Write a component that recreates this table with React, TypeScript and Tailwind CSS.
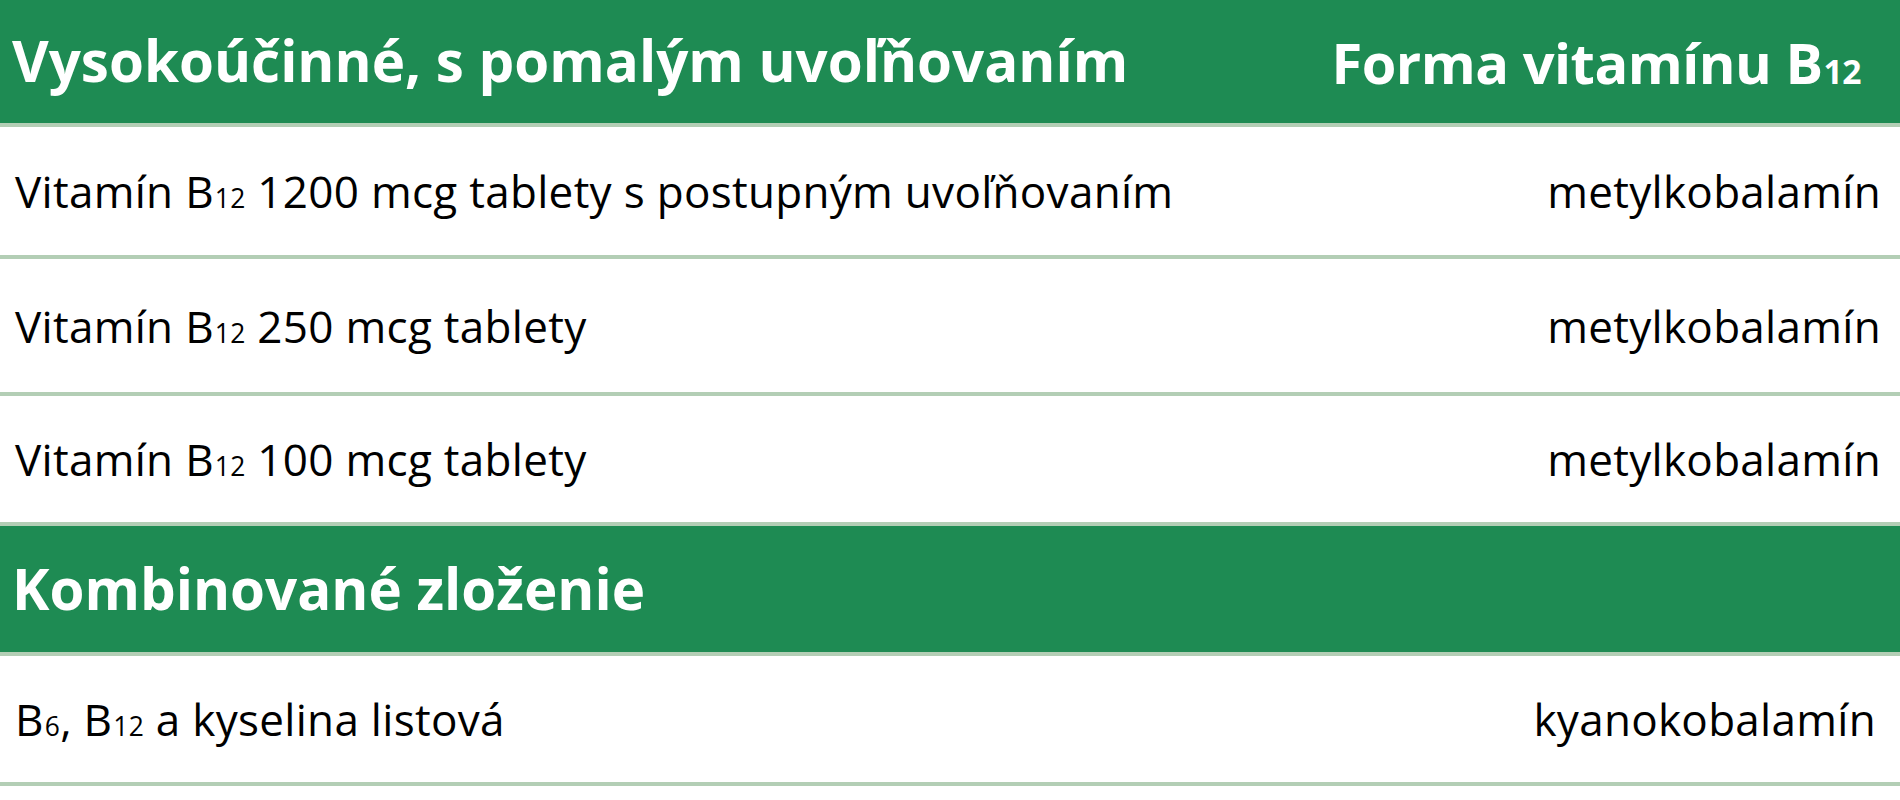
import React from 'react';

const rowFont = { fontFamily: '"Open Sans", Lato, sans-serif' };

function Sub({ children }: { children: React.ReactNode }) {
  return <span className="text-[0.6em] ml-[1px]">{children}</span>;
}

export default function App() {
  return (
    <div className="w-[1900px] h-[800px] bg-white text-black" style={rowFont}>
      {/* Section header */}
      <div className="h-[127px] bg-[#1e8b53] border-b-4 border-[#b3ceb5] flex items-center justify-between pl-[12px] pr-[39px] text-white font-bold text-[56px] leading-none">
        <span className="text-[56.5px]">Vysokoúčinné, s pomalým uvoľňovaním</span>
        <span className="tracking-[-0.5px]">
          Forma vitamínu B<Sub>12</Sub>
        </span>
      </div>

      {/* Rows */}
      <div className="h-[132px] border-b-4 border-[#b3ceb5] flex items-center justify-between pl-[15px] pr-[19px] text-[44px] leading-none tracking-[0.3px]">
        <span>
          Vitamín B<Sub>12</Sub> 1200 mcg tablety s postupným uvoľňovaním
        </span>
        <span>metylkobalamín</span>
      </div>
      <div className="h-[137px] border-b-4 border-[#b3ceb5] flex items-center justify-between pl-[15px] pr-[19px] text-[44px] leading-none tracking-[0.3px]">
        <span>
          Vitamín B<Sub>12</Sub> 250 mcg tablety
        </span>
        <span>metylkobalamín</span>
      </div>
      <div className="h-[130px] border-b-4 border-[#b3ceb5] flex items-center justify-between pl-[15px] pr-[19px] text-[44px] leading-none tracking-[0.3px]">
        <span>
          Vitamín B<Sub>12</Sub> 100 mcg tablety
        </span>
        <span>metylkobalamín</span>
      </div>

      <div className="h-[130px] bg-[#1e8b53] border-b-4 border-[#b3ceb5] flex items-center pl-[12px] text-white font-bold text-[56.5px] leading-none">
        <span>Kombinované zloženie</span>
      </div>

      <div className="h-[130px] border-b-4 border-[#b3ceb5] flex items-center justify-between pl-[15px] pr-[24px] text-[44px] leading-none tracking-[0.3px]">
        <span>
          B<Sub>6</Sub>, B<Sub>12</Sub> a kyselina listová
        </span>
        <span>kyanokobalamín</span>
      </div>
    </div>
  );
}
